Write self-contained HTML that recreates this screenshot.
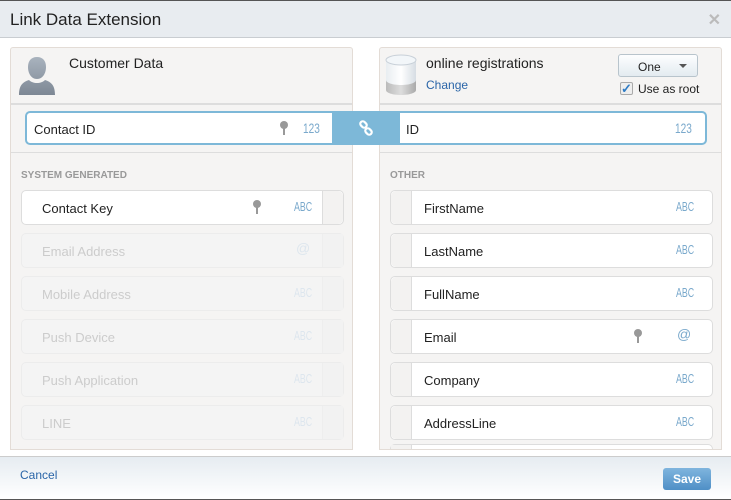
<!DOCTYPE html>
<html><head><style>
*{box-sizing:border-box;margin:0;padding:0}
body{width:731px;height:500px;font-family:"Liberation Sans",sans-serif;background:#fff;position:relative;overflow:hidden}
.hdr{position:absolute;left:0;top:0;width:731px;height:38px;background:#e8ecf0;border-bottom:1px solid #c9cdd1;border-top:1px solid #555}
.hdr .t{position:absolute;left:10px;top:9px;font-size:17px;color:#222}
.hdr .x{position:absolute;right:10px;top:9px;font-size:16px;color:#bbb;font-weight:bold}
.panel{position:absolute;top:47px;height:403px;background:#f5f4f3;border:1px solid #e3dcd6;border-radius:3px 3px 0 0}
.ph{position:absolute;left:0;top:0;right:0;height:57px;border-bottom:2px solid #ddd}
.sep{position:absolute;left:0;right:0;top:104px;border-top:1px solid #ddd}
.lab{position:absolute;font-size:10px;color:#999;font-weight:bold;top:122px}
.item{position:absolute;height:35px;background:#fff;border:1px solid #ddd;border-radius:5px;font-size:13px;color:#222}
.item .n{position:absolute;top:10px}
.item .ty{position:absolute;top:8px;font-size:13px;color:#7aa9cc;transform:scaleX(.68);transform-origin:left}
.dis{background:#f4f4f4;border-color:#ececec;color:#ccc}
.dis .ty{color:#dde6ee}
.grip{position:absolute;top:0;bottom:0;width:21px;background:#f3f2f1}
.key{position:absolute;top:9px;width:4px;height:14px}
.key:before{content:"";position:absolute;left:-2px;top:0;width:8px;height:8px;border-radius:50%;background:#999}
.key:after{content:"";position:absolute;left:1px;top:6px;width:2px;height:8px;background:#999}
</style></head><body>
<div class="hdr"><span class="t">Link Data Extension</span><span class="x">✕</span></div>

<div class="panel" style="left:10px;width:343px">
  <div class="ph">
    <svg style="position:absolute;left:6px;top:7px" width="40" height="40" viewBox="0 0 40 40"><defs><linearGradient id="g" x1="0" y1="0" x2="0" y2="1"><stop offset="0" stop-color="#a9b3be"/><stop offset="1" stop-color="#7d8794"/></linearGradient></defs><path d="M20 2c6 0 9 4 9 10s-3 12-9 12-9-6-9-12 3-10 9-10zM12 25c-6 2-10 5-10 15h36c0-10-4-13-10-15-2 2-5 3-8 3s-6-1-8-3z" fill="url(#g)"/></svg>
    <div style="position:absolute;left:58px;top:7px;font-size:14px;color:#222">Customer Data</div>
  </div>
  <div class="sep"></div>
  <div class="lab" style="left:10px">SYSTEM GENERATED</div>
</div>

<div class="panel" style="left:379px;width:343px;overflow:hidden">
  <div class="ph">
    <svg style="position:absolute;left:5px;top:6px" width="32" height="42" viewBox="0 0 32 42"><defs><linearGradient id="c" x1="0" y1="0" x2="1" y2="0"><stop offset="0" stop-color="#e8edf1"/><stop offset=".5" stop-color="#fff"/><stop offset="1" stop-color="#d6dde3"/></linearGradient><linearGradient id="d" x1="0" y1="0" x2="1" y2="0"><stop offset="0" stop-color="#bbb"/><stop offset=".5" stop-color="#ddd"/><stop offset="1" stop-color="#aaa"/></linearGradient></defs><path d="M1 6v30c0 3 7 5 15 5s15-2 15-5V6z" fill="url(#d)"/><path d="M1 6v20c0 3 7 5 15 5s15-2 15-5V6z" fill="url(#c)"/><ellipse cx="16" cy="6" rx="15" ry="5" fill="#f2f6f9" stroke="#c8d0d8"/></svg>
    <div style="position:absolute;left:46px;top:7px;font-size:14px;color:#222">online registrations</div>
    <div style="position:absolute;left:46px;top:30px;font-size:12px;color:#2a65a8">Change</div>
    <div style="position:absolute;left:238px;top:6px;width:80px;height:23px;border:1px solid #b8c4cc;border-radius:3px;background:linear-gradient(#fdfeff,#e3ebf0);font-size:12px;color:#222"><span style="position:absolute;left:19px;top:5px">One</span><span style="position:absolute;left:60px;top:9px;border:4px solid transparent;border-top:4px solid #555"></span></div>
    <div style="position:absolute;left:240px;top:34px;width:13px;height:13px;border:1px solid #aaa;border-radius:2px;background:#eee;color:#2e7bc4;font-size:13px;line-height:11px;font-weight:bold">✓</div>
    <div style="position:absolute;left:258px;top:34px;font-size:12px;color:#222">Use as root</div>
  </div>
  <div class="sep"></div>
  <div class="lab" style="left:10px">OTHER</div>
  <div class="item" style="left:10px;top:396px;width:323px;height:20px"><div class="grip" style="left:0;border-right:1px solid #ddd"></div></div>
</div>

<!-- link row -->
<div style="position:absolute;left:25px;top:111px;width:682px;height:34px;border:2px solid #7db8d8;border-radius:5px;background:#fff"></div>
<div style="position:absolute;left:332px;top:111px;width:68px;height:34px;background:#7db8d8"><svg style="position:absolute;left:26px;top:9px" width="16" height="16" viewBox="0 0 16 16" fill="none" stroke="#fff" stroke-width="2.2"><rect x="2" y="2" width="7" height="5" rx="2.5" transform="rotate(45 5.5 4.5)"/><rect x="7" y="9" width="7" height="5" rx="2.5" transform="rotate(45 10.5 11.5)"/></svg></div>
<div style="position:absolute;left:34px;top:122px;font-size:13px;color:#222">Contact ID</div>
<div class="key" style="left:282px;top:121px"></div>
<div style="position:absolute;left:303px;top:120px;font-size:14px;color:#7aa9cc;transform:scaleX(.72);transform-origin:left">123</div>
<div style="position:absolute;left:406px;top:122px;font-size:13px;color:#222">ID</div>
<div style="position:absolute;left:675px;top:120px;font-size:14px;color:#7aa9cc;transform:scaleX(.72);transform-origin:left">123</div>

<!-- left items -->
<div class="item" style="left:21px;top:190px;width:323px"><span class="n" style="left:20px">Contact Key</span><div class="key" style="left:233px"></div><span class="ty" style="left:272px">ABC</span><div class="grip" style="right:0;border-left:1px solid #ddd;border-radius:0 5px 5px 0"></div></div>
<div class="item dis" style="left:21px;top:233px;width:323px"><span class="n" style="left:20px">Email Address</span><span class="ty" style="left:274px;font-size:14px;top:6px;transform:none">@</span><div class="grip" style="right:0;border-left:1px solid #eee;background:#f2f2f2"></div></div>
<div class="item dis" style="left:21px;top:276px;width:323px"><span class="n" style="left:20px">Mobile Address</span><span class="ty" style="left:272px">ABC</span><div class="grip" style="right:0;border-left:1px solid #eee;background:#f2f2f2"></div></div>
<div class="item dis" style="left:21px;top:319px;width:323px"><span class="n" style="left:20px">Push Device</span><span class="ty" style="left:272px">ABC</span><div class="grip" style="right:0;border-left:1px solid #eee;background:#f2f2f2"></div></div>
<div class="item dis" style="left:21px;top:362px;width:323px"><span class="n" style="left:20px">Push Application</span><span class="ty" style="left:272px">ABC</span><div class="grip" style="right:0;border-left:1px solid #eee;background:#f2f2f2"></div></div>
<div class="item dis" style="left:21px;top:405px;width:323px"><span class="n" style="left:20px">LINE</span><span class="ty" style="left:272px">ABC</span><div class="grip" style="right:0;border-left:1px solid #eee;background:#f2f2f2"></div></div>

<!-- right items -->
<div class="item" style="left:390px;top:190px;width:323px"><div class="grip" style="left:0;border-right:1px solid #ddd;border-radius:5px 0 0 5px"></div><span class="n" style="left:33px">FirstName</span><span class="ty" style="left:285px">ABC</span></div>
<div class="item" style="left:390px;top:233px;width:323px"><div class="grip" style="left:0;border-right:1px solid #ddd;border-radius:5px 0 0 5px"></div><span class="n" style="left:33px">LastName</span><span class="ty" style="left:285px">ABC</span></div>
<div class="item" style="left:390px;top:276px;width:323px"><div class="grip" style="left:0;border-right:1px solid #ddd;border-radius:5px 0 0 5px"></div><span class="n" style="left:33px">FullName</span><span class="ty" style="left:285px">ABC</span></div>
<div class="item" style="left:390px;top:319px;width:323px"><div class="grip" style="left:0;border-right:1px solid #ddd;border-radius:5px 0 0 5px"></div><span class="n" style="left:33px">Email</span><div class="key" style="left:245px"></div><span class="ty" style="left:286px;font-size:14px;top:6px;transform:none">@</span></div>
<div class="item" style="left:390px;top:362px;width:323px"><div class="grip" style="left:0;border-right:1px solid #ddd;border-radius:5px 0 0 5px"></div><span class="n" style="left:33px">Company</span><span class="ty" style="left:285px">ABC</span></div>
<div class="item" style="left:390px;top:405px;width:323px"><div class="grip" style="left:0;border-right:1px solid #ddd;border-radius:5px 0 0 5px"></div><span class="n" style="left:33px">AddressLine</span><span class="ty" style="left:285px">ABC</span></div>

<!-- footer -->
<div style="position:absolute;left:0;top:456px;width:731px;height:44px;border-top:1px solid #ccc;background:linear-gradient(#e6ecf1,#fff);border-bottom:1px solid #555"></div>
<div style="position:absolute;left:20px;top:468px;font-size:12px;color:#2a65a8">Cancel</div>
<div style="position:absolute;left:663px;top:468px;width:48px;height:22px;border-radius:3px;background:linear-gradient(#7fb5de,#4f8fc6);color:#fff;font-size:12px;font-weight:bold;text-align:center;line-height:22px">Save</div>
</body></html>
